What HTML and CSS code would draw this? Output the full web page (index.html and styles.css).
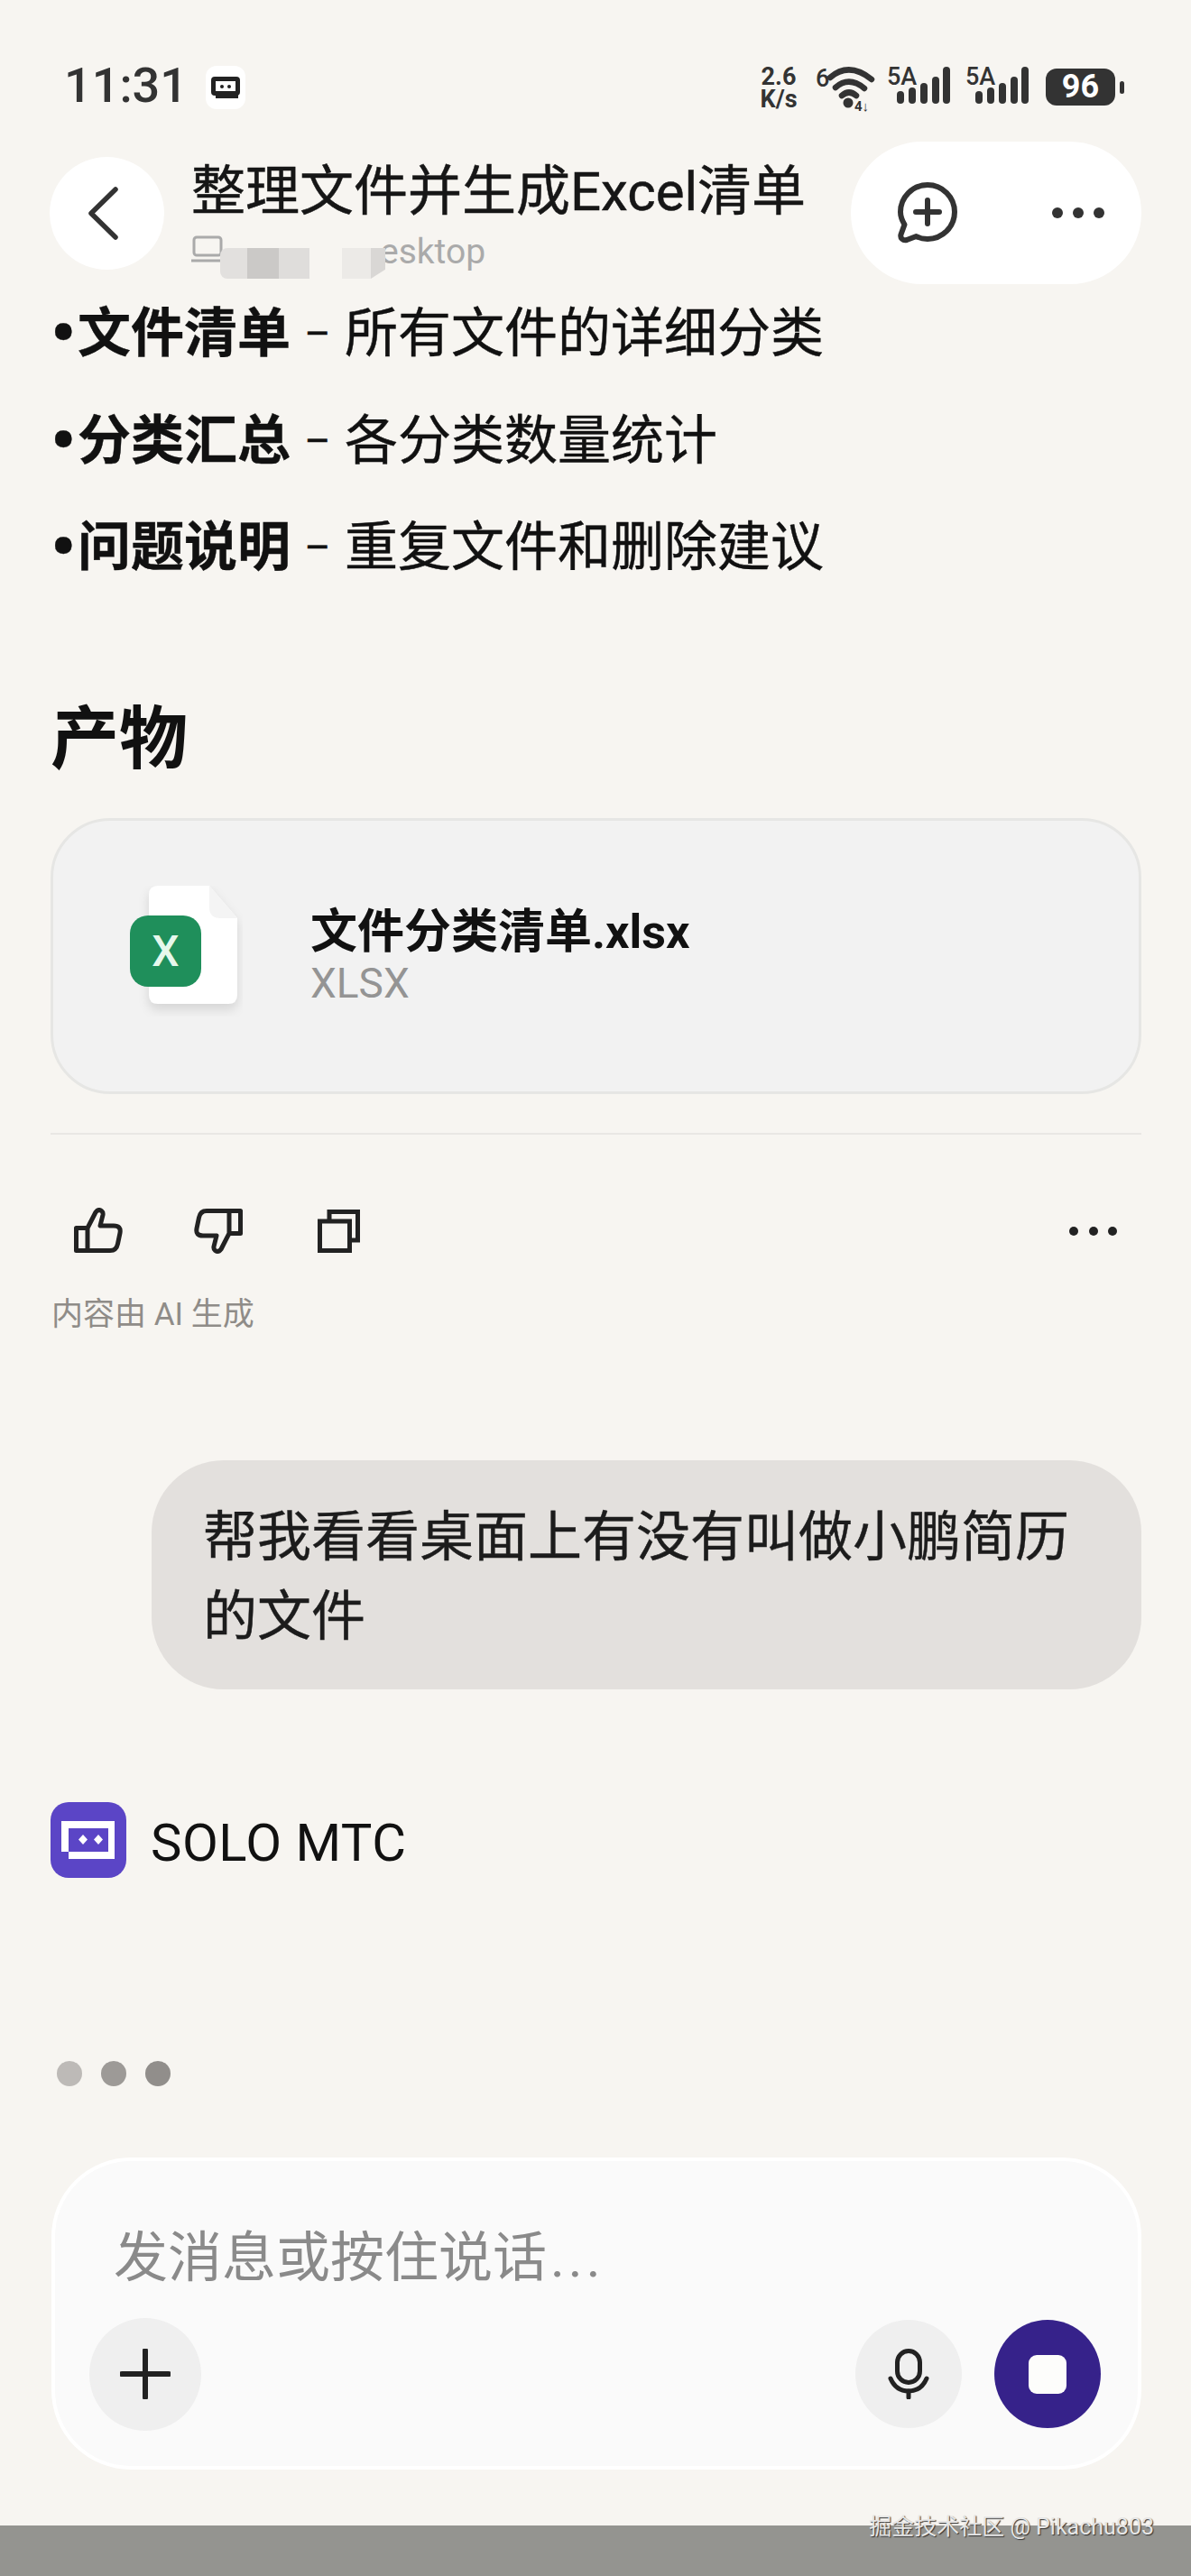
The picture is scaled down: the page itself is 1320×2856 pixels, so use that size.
FILE: index.html
```html
<!DOCTYPE html>
<html lang="zh-CN">
  <head>
    <meta charset="UTF-8" />
    <meta name="viewport" content="width=device-width, initial-scale=1.0" />
    <title>整理文件并生成Excel清单</title>
    <link rel="stylesheet" href="styles.css">
  </head>
  <body>
    <div class="screen">
      <div class="status">
        <span class="time">11:31</span>
        <span class="mini-app">
          <svg width="32" height="24" viewBox="0 0 32 24">
            <rect x="2.500" y="2.500" width="27" height="16" rx="1.500" fill="none" stroke="#222" stroke-width="5"/>
            <rect x="5" y="20" width="25" height="4" fill="#222"/>
            <circle cx="12" cy="11" r="2" fill="#222"/>
            <circle cx="20" cy="11" r="2" fill="#222"/>
          </svg>
        </span>
        <div class="status-right">
          <span class="speed">2.6<br>K/s</span>
          <svg class="wifi" width="66" height="64" viewBox="0 -8 66 64">
            <text x="0" y="23" class="net-label">6</text>
            <g fill="none" stroke="#333" stroke-width="6.500" stroke-linecap="round">
              <path d="M16 13 Q37 -5 62 15"/>
              <path d="M22 24 Q37 11 54 25"/>
              <path d="M29 33 Q37 26 45 33"/>
            </g>
            <circle cx="36" cy="41" r="5.500" fill="#333"/>
            <text x="43" y="50" class="net-tiny">4↓</text>
          </svg>
          <svg class="signal" width="76" height="52" viewBox="0 -8 76 52">
            <text x="0" y="21" class="net-label">5A</text>
            <rect x="11" y="28" width="8" height="14" rx="4" fill="#333"/>
            <rect x="24" y="24" width="8" height="18" rx="4" fill="#333"/>
            <rect x="37" y="19" width="8" height="23" rx="4" fill="#333"/>
            <rect x="50" y="12" width="8" height="30" rx="4" fill="#333"/>
            <rect x="62" y="1" width="8" height="41" rx="4" fill="#333"/>
          </svg>
          <svg class="signal" width="76" height="52" viewBox="0 -8 76 52">
            <text x="0" y="21" class="net-label">5A</text>
            <rect x="11" y="28" width="8" height="14" rx="4" fill="#333"/>
            <rect x="24" y="24" width="8" height="18" rx="4" fill="#333"/>
            <rect x="37" y="19" width="8" height="23" rx="4" fill="#333"/>
            <rect x="50" y="12" width="8" height="30" rx="4" fill="#333"/>
            <rect x="62" y="1" width="8" height="41" rx="4" fill="#333"/>
          </svg>
          <span class="battery">96</span>
          <span class="battery-nub"></span>
        </div>
      </div>

      <div class="header">
        <div class="back">
          <svg width="33" height="59" viewBox="0 0 33 59">
            <path d="M30 3 L3 29.500 L30 56" fill="none" stroke="#333" stroke-width="5.500" stroke-linecap="round" stroke-linejoin="round"/>
          </svg>
        </div>
        <div class="title-block">
          <div class="title">整理文件并生成Excel清单</div>
          <div class="path">
            <svg width="37" height="30" viewBox="0 0 37 30">
              <rect x="3" y="2" width="30" height="20" rx="3" fill="none" stroke="#aaa" stroke-width="3"/>
              <path d="M0 28 H37" stroke="#aaa" stroke-width="3"/>
            </svg>
            <span class="path-text">esktop</span>
            <span class="mosaic">
              <i class="m1"></i><i class="m2"></i><i class="m3"></i>
            </span>
            <span class="mosaic mosaic-end">
              <i class="m4"></i><i class="m5"></i>
            </span>
          </div>
        </div>
        <div class="header-pill">
          <svg width="68" height="68" viewBox="0 0 68 68">
            <path d="M7.500 47 C4.500 42 3 38 3 33 A30 30 0 1 1 33 63 C28 63 24 62 20.500 60 L10 64 C5.500 65 2.500 62 3.500 58 Z" fill="none" stroke="#333" stroke-width="6" stroke-linejoin="round"/>
            <path d="M20 33 H46 M33 20 V46" stroke="#333" stroke-width="6" stroke-linecap="round"/>
          </svg>
          <div class="dots">
            <span></span><span></span><span></span>
          </div>
        </div>
      </div>

      <ul class="summary">
        <li><span class="bullet">•</span><b>文件清单</b><span class="dash">–</span>所有文件的详细分类</li>
        <li><span class="bullet">•</span><b>分类汇总</b><span class="dash">–</span>各分类数量统计</li>
        <li><span class="bullet">•</span><b>问题说明</b><span class="dash">–</span>重复文件和删除建议</li>
      </ul>

      <h2 class="section-title">产物</h2>

      <div class="file-card">
        <svg class="file-icon" width="125" height="145" viewBox="0 0 125 145">
          <path class="paper" d="M31 0 H88 L119 36 V121 Q119 131 109 131 H31 Q21 131 21 121 V10 Q21 0 31 0 Z" fill="#fff"/>
          <path d="M88 0 L119 36 H100 Q88 36 88 24 Z" fill="#f4f4f4"/>
          <rect x="0" y="33" width="79" height="79" rx="20" fill="#1f8f5b"/>
          <text x="39.500" y="89" text-anchor="middle" class="file-x">X</text>
        </svg>
        <div class="file-text">
          <div class="file-name">文件分类清单.xlsx</div>
          <div class="file-type">XLSX</div>
        </div>
      </div>

      <div class="divider"></div>

      <div class="actions">
        <svg width="54" height="52" viewBox="0 0 54 52" class="act-up">
          <path d="M2.500 22.500 H15 V47.500 H2.500 Z M15 22.500 L24 5 Q27 1 30.500 3.500 Q32.500 5 32 8 L29 20 H44 Q52.500 20 51 28 L48.500 40 Q47 47.500 40 47.500 H15" fill="none" stroke="#222" stroke-width="5" stroke-linejoin="round"/>
        </svg>
        <svg width="54" height="52" viewBox="0 0 54 52" class="act-down">
          <g transform="rotate(180 27 25.500)">
            <path d="M2.500 22.500 H15 V47.500 H2.500 Z M15 22.500 L24 5 Q27 1 30.500 3.500 Q32.500 5 32 8 L29 20 H44 Q52.500 20 51 28 L48.500 40 Q47 47.500 40 47.500 H15" fill="none" stroke="#222" stroke-width="5" stroke-linejoin="round"/>
          </g>
        </svg>
        <svg width="47" height="48" viewBox="0 0 47 48" class="act-copy">
          <rect x="2.500" y="13" width="33" height="32.500" fill="none" stroke="#222" stroke-width="5"/>
          <path d="M13 12 V2.500 H44.500 V34 H36" fill="none" stroke="#222" stroke-width="5"/>
        </svg>
        <div class="dots dots-small">
          <span></span><span></span><span></span>
        </div>
      </div>

      <div class="ai-note">内容由 AI 生成</div>

      <div class="bubble">帮我看看桌面上有没有叫做小鹏简历的文件</div>

      <div class="agent">
        <svg width="84" height="84" viewBox="0 0 84 84">
          <rect width="84" height="84" rx="20" fill="#5b45c6"/>
          <path d="M12 21 H71 V63 H20 V55 H12 Z" fill="#fff"/>
          <rect x="20" y="29" width="44" height="26" fill="#5b45c6"/>
          <path d="M36 36 L41 41.500 L36 47 L31 41.500 Z M53 36 L58 41.500 L53 47 L48 41.500 Z" fill="#fff"/>
        </svg>
        <span class="agent-name">SOLO MTC</span>
      </div>

      <div class="typing">
        <span class="t1"></span><span class="t2"></span><span class="t3"></span>
      </div>

      <div class="composer">
        <div class="placeholder">发消息或按住说话<span class="ellipsis">...</span></div>
        <div class="composer-row">
          <div class="btn-plus">
            <svg width="56" height="56" viewBox="0 0 56 56">
              <path d="M2 28 H54 M28 2 V54" stroke="#222" stroke-width="6" stroke-linecap="round"/>
            </svg>
          </div>
          <div class="btn-mic">
            <svg width="46" height="56" viewBox="0 0 46 56">
              <rect x="10.500" y="2.500" width="25" height="35" rx="12.500" fill="none" stroke="#222" stroke-width="5"/>
              <path d="M3 33 Q9 47 23 47 Q37 47 43 33" fill="none" stroke="#222" stroke-width="5" stroke-linecap="round"/>
              <path d="M23 47 V54" stroke="#222" stroke-width="5" stroke-linecap="round"/>
            </svg>
          </div>
          <div class="btn-stop"><span></span></div>
        </div>
      </div>

      <div class="bottom-bar"></div>
      <div class="watermark">掘金技术社区 @ Pikachu803</div>
    </div>
  </body>
</html>
```

FILE: styles.css
```css
* {
  box-sizing: border-box;
}

body {
  margin: 0;
  background-color: #f7f5f1;
  font-family: Roboto, "Noto Sans CJK SC", sans-serif;
  color: #111;
}

.screen {
  position: relative;
  display: flex;
  flex-direction: column;
  width: 1320px;
  height: 2856px;
  overflow: hidden;
}

/* status bar */
.status {
  display: flex;
  align-items: flex-start;
  height: 157px;
  padding: 68px 74px 0 71px;
}

.time {
  font-size: 54px;
  line-height: 54px;
  font-weight: 500;
  color: #333;
}

.mini-app {
  display: flex;
  align-items: center;
  justify-content: center;
  width: 44px;
  height: 48px;
  margin: 5px 0 0 20px;
  background-color: #fff;
  border-radius: 12px;
}

.status-right {
  display: flex;
  align-items: flex-start;
  margin-left: auto;
  padding-top: 5px;
}

.speed {
  width: 46px;
  font-size: 27px;
  line-height: 25px;
  font-weight: 700;
  text-align: center;
  color: #333;
}

.wifi {
  margin: -8px 0 0 18px;
}

.net-label {
  font-family: Roboto, sans-serif;
  font-size: 27px;
  font-weight: 500;
  fill: #333;
}

.net-tiny {
  font-family: Roboto, sans-serif;
  font-size: 15px;
  font-weight: 700;
  fill: #333;
}

.signal {
  margin: -8px 11px 0 0;
}

.wifi + .signal {
  margin-left: 13px;
}

.signal:last-of-type {
  margin-right: 13px;
}

.battery {
  width: 77px;
  height: 41px;
  margin-top: 3px;
  background-color: #333;
  border-radius: 12px;
  color: #fff;
  font-size: 36px;
  line-height: 41px;
  font-weight: 700;
  text-align: center;
}

.battery-nub {
  width: 5px;
  height: 14px;
  margin: 17px 0 0 5px;
  background-color: #333;
  border-radius: 3px;
}

/* header */
.header {
  display: flex;
  align-items: flex-start;
  height: 150px;
  padding: 0 55px;
}

.back {
  display: flex;
  align-items: center;
  justify-content: center;
  flex: none;
  width: 127px;
  height: 125px;
  margin-top: 17px;
  padding-right: 8px;
  background-color: #fff;
  border-radius: 50%;
}

.title-block {
  margin: 26px 0 0 30px;
}

.title {
  font-size: 60px;
  line-height: 60px;
  white-space: nowrap;
  color: #161616;
  -webkit-text-stroke: 0.5px #161616;
}

.path {
  position: relative;
  display: flex;
  align-items: center;
  gap: 8px;
  height: 44px;
  margin-top: 11px;
  color: #aaa;
  font-size: 39px;
}

.path-text {
  margin: 6px 0 0 164px;
}

.mosaic {
  position: absolute;
  left: 32px;
  top: 9px;
  display: flex;
  align-items: flex-end;
  height: 46px;
}

.mosaic i {
  display: block;
  height: 34px;
}

.mosaic-end {
  left: 167px;
}

.m1 {
  width: 30px;
  background-color: #e2e0de;
  border-radius: 8px 0 0 8px;
}

.m2 {
  width: 35px;
  background-color: #cbc9c7;
}

.m3 {
  width: 34px;
  background-color: #dfdddb;
}

.m4 {
  width: 32px;
  background-color: #eceae7;
}

.m5 {
  width: 16px;
  background-color: #d9d7d5;
  clip-path: polygon(0 0, 100% 0, 100% 70%, 0 100%);
}

.header-pill {
  display: flex;
  align-items: center;
  justify-content: space-between;
  flex: none;
  width: 322px;
  height: 158px;
  margin-left: auto;
  padding: 0 41px 0 52px;
  background-color: #fff;
  border-radius: 79px;
}

.dots {
  display: flex;
  gap: 11px;
}

.dots span {
  width: 12px;
  height: 12px;
  background-color: #333;
  border-radius: 50%;
}

/* answer */
.summary {
  margin: 4px 0 0;
  padding: 0 0 0 56px;
  list-style: none;
  font-size: 59px;
  line-height: 118.500px;
  -webkit-text-stroke: 0.4px #111;
}

.summary li {
  display: flex;
  white-space: nowrap;
}

.bullet {
  width: 30px;
  font-size: 78px;
  font-weight: 700;
}

.dash {
  width: 60px;
  font-size: 44px;
  text-align: center;
}

.section-title {
  margin: 103px 0 0;
  padding-left: 56px;
  font-size: 76px;
  line-height: 100px;
  font-weight: 700;
}

.file-card {
  display: flex;
  align-items: center;
  gap: 81px;
  height: 306px;
  margin: 37px 55px 0 56px;
  padding: 0 0 0 85px;
  background-color: #f2f2f2;
  border: 3px solid #e6e6e4;
  border-radius: 66px;
}

.file-icon {
  flex: none;
  margin-right: -6px;
  margin-top: -11px;
}

.paper {
  filter: drop-shadow(0 6px 6px rgba(0, 0, 0, 0.12));
}

.file-x {
  font-family: Roboto, sans-serif;
  font-size: 48px;
  font-weight: 500;
  fill: #e6f8ec;
}

.file-name {
  padding-top: 3px;
  font-size: 52px;
  line-height: 58px;
  font-weight: 700;
}

.file-type {
  font-size: 46px;
  line-height: 55px;
  color: #949494;
}

.divider {
  height: 2px;
  margin: 43px 55px 0 56px;
  background-color: #e9e7e4;
}

.actions {
  display: flex;
  align-items: center;
  height: 60px;
  margin-top: 77px;
  padding: 0 82px 0 82px;
}

.act-down {
  margin-left: 79px;
}

.act-copy {
  margin-left: 83px;
}

.dots-small {
  gap: 11.500px;
  margin-left: auto;
}

.dots-small span {
  width: 10px;
  height: 10px;
  background-color: #222;
}

.ai-note {
  margin-top: 41px;
  padding-left: 57px;
  font-size: 35px;
  line-height: 44px;
  color: #8f8c88;
}

.bubble {
  width: 1097px;
  height: 254px;
  margin: 139px 0 0 168px;
  padding: 42px 70px 0 57px;
  background-color: #e3e0dd;
  border-radius: 80px;
  font-size: 60px;
  line-height: 88px;
  color: #1c1c1c;
  -webkit-text-stroke: 0.4px #1c1c1c;
}

.agent {
  display: flex;
  align-items: center;
  gap: 27px;
  margin: 125px 0 0 56px;
}

.agent-name {
  margin-top: 6px;
  font-size: 58px;
  line-height: 78px;
  letter-spacing: 0.500px;
  color: #111;
}

.typing {
  display: flex;
  gap: 21px;
  margin: 203px 0 0 63px;
}

.typing span {
  width: 28px;
  height: 28px;
  border-radius: 50%;
}

.t1 {
  background-color: #bdbab7;
}

.t2 {
  background-color: #9d9a97;
}

.t3 {
  background-color: #918e8b;
}

/* input box */
.composer {
  width: 1208px;
  height: 346px;
  margin: 79px 0 0 57px;
  padding: 68px 41px 0 38px;
  background-color: #fafafa;
  border: 4px solid #fff;
  border-radius: 88px;
}

.placeholder {
  padding-left: 27px;
  font-size: 60px;
  line-height: 80px;
  color: #8a8a8a;
}

.ellipsis {
  margin-left: 4px;
  letter-spacing: 4px;
}

.composer-row {
  display: flex;
  align-items: center;
  margin-top: 26px;
}

.btn-plus,
.btn-mic,
.btn-stop {
  display: flex;
  align-items: center;
  justify-content: center;
  flex: none;
  border-radius: 50%;
}

.btn-plus {
  width: 124px;
  height: 125px;
  background-color: #efefef;
}

.btn-mic {
  width: 118px;
  height: 120px;
  margin-left: auto;
  background-color: #efefef;
}

.btn-stop {
  width: 118px;
  height: 120px;
  margin-left: 36px;
  background-color: #36228a;
}

.btn-stop span {
  width: 42px;
  height: 43px;
  background-color: #fdfdfb;
  border-radius: 9px;
}

.bottom-bar {
  height: 56px;
  margin-top: auto;
  background-color: #949490;
}

.watermark {
  position: absolute;
  right: 41px;
  top: 2786px;
  font-size: 25px;
  line-height: 32px;
  color: #e6e6e6;
  text-shadow: 1px 1px 1px #333;
  white-space: nowrap;
}
```
